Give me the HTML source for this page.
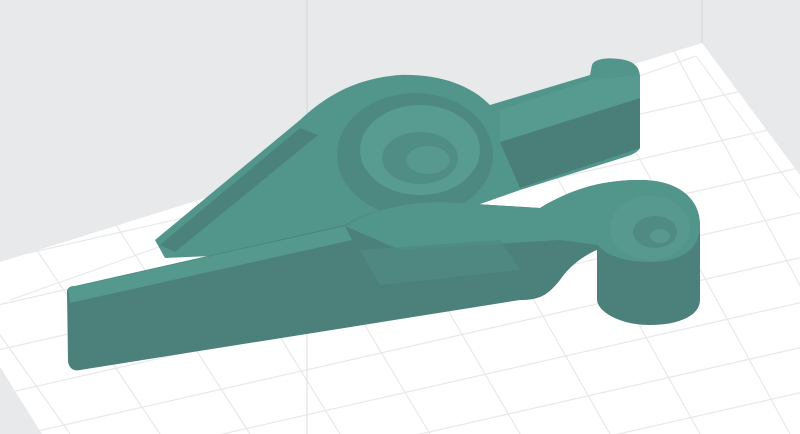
<!DOCTYPE html>
<html><head><meta charset="utf-8"><style>
html,body{margin:0;padding:0;background:#e8e9eb;width:800px;height:434px;overflow:hidden;}
svg{display:block}
</style></head><body>
<svg width="800" height="434" viewBox="0 0 800 434" xmlns="http://www.w3.org/2000/svg">
<defs>
<clipPath id="plate"><polygon points="0,262 702,43 800,175 800,434 42,434 0,367"/></clipPath>
</defs>
<rect width="800" height="434" fill="#e8e9eb"/>
<line x1="307" y1="0" x2="307" y2="434" stroke="#d6d7d9" stroke-width="1"/>
<line x1="702" y1="0" x2="702" y2="43" stroke="#d6d7d9" stroke-width="1"/>
<polygon points="0,262 702,43 800,175 800,434 42,434 0,367" fill="#ffffff"/>
<g clip-path="url(#plate)" stroke="#e7e8ea" stroke-width="1.2" fill="none">
<polyline points="10,300 696,56 800,198" stroke="#eaebec"/>
<line x1="-200" y1="350" x2="900" y2="100"/>
<line x1="-200" y1="395" x2="900" y2="145"/>
<line x1="-200" y1="440" x2="900" y2="190"/>
<line x1="-200" y1="485" x2="900" y2="235"/>
<line x1="-200" y1="530" x2="900" y2="280"/>
<line x1="-200" y1="575" x2="900" y2="325"/>
<line x1="-200" y1="620" x2="900" y2="370"/>
<line x1="-200" y1="665" x2="900" y2="415"/>
<line x1="-200" y1="710" x2="900" y2="460"/>
<line x1="-200" y1="305" x2="900" y2="55"/>
<line x1="-60" y1="250" x2="70" y2="434"/>
<line x1="20" y1="225" x2="160" y2="434"/>
<line x1="100" y1="200" x2="250" y2="434"/>
<line x1="180" y1="175" x2="340" y2="434"/>
<line x1="260" y1="150" x2="430" y2="434"/>
<line x1="340" y1="125" x2="520" y2="434"/>
<line x1="420" y1="100" x2="610" y2="434"/>
<line x1="500" y1="75" x2="700" y2="434"/>
<line x1="580" y1="50" x2="790" y2="434"/>
<line x1="660" y1="25" x2="880" y2="434"/>
<line x1="740" y1="0" x2="970" y2="434"/>
</g>
<line x1="307" y1="170" x2="307" y2="434" stroke="#dcdddf" stroke-width="1"/>
<!-- upper arm -->
<path d="M155,240 L300,120 C330,92 360,78 400,75 C440,74 470,85 490,105 L590,75 L592,65 C595,58 610,57 625,60 C637,63 640,70 640,78 L640,148 C638,152 632,155 625,157 L520,190 L350,250 L165,258 Z" fill="#52958b"/>
<polygon points="160,245 300,128 318,135 175,252" fill="#4b827b"/>
<polygon points="500,142 640,98 640,148 520,188" fill="#4a7f79"/>
<polygon points="500,110 590,80 640,75 640,98 500,142" fill="#579a90"/>
<ellipse cx="415" cy="155" rx="78" ry="62" fill="#4e8981"/>
<ellipse cx="420" cy="150" rx="60" ry="45" fill="#589b91"/>
<ellipse cx="420" cy="158" rx="38" ry="26" fill="#508d85"/>
<ellipse cx="428" cy="160" rx="22" ry="14" fill="#58998f"/>
<!-- lower arm -->
<path d="M67,292 C67,288 70,286 75,286 L345,225 C380,205 420,200 460,203 L540,208 C570,190 600,180 640,180 C680,180 700,200 700,225 L700,300 C700,315 680,325 650,325 C620,325 598,312 597,300 L597,250 C585,255 570,265 560,280 C548,295 540,300 520,300 L80,370 C72,372 68,366 68,360 Z" fill="#4c817b"/>
<polygon points="68,288 345,226 352,240 70,303" fill="#55988e"/>
<path d="M345,226 C380,205 420,200 460,203 L540,208 C570,190 600,180 640,180 C680,180 700,200 700,225 C700,250 680,262 650,262 C625,262 605,255 598,245 L560,240 L400,250 Z" fill="#52958b"/>
<ellipse cx="650" cy="228" rx="40" ry="32" fill="#58998f"/>
<ellipse cx="655" cy="232" rx="22" ry="16" fill="#4f8a83"/>
<ellipse cx="660" cy="236" rx="10" ry="7" fill="#58998f"/>
<polygon points="360,250 500,240 520,270 380,285" fill="#4f8a83" opacity="0.8"/>
</svg>
</body></html>
